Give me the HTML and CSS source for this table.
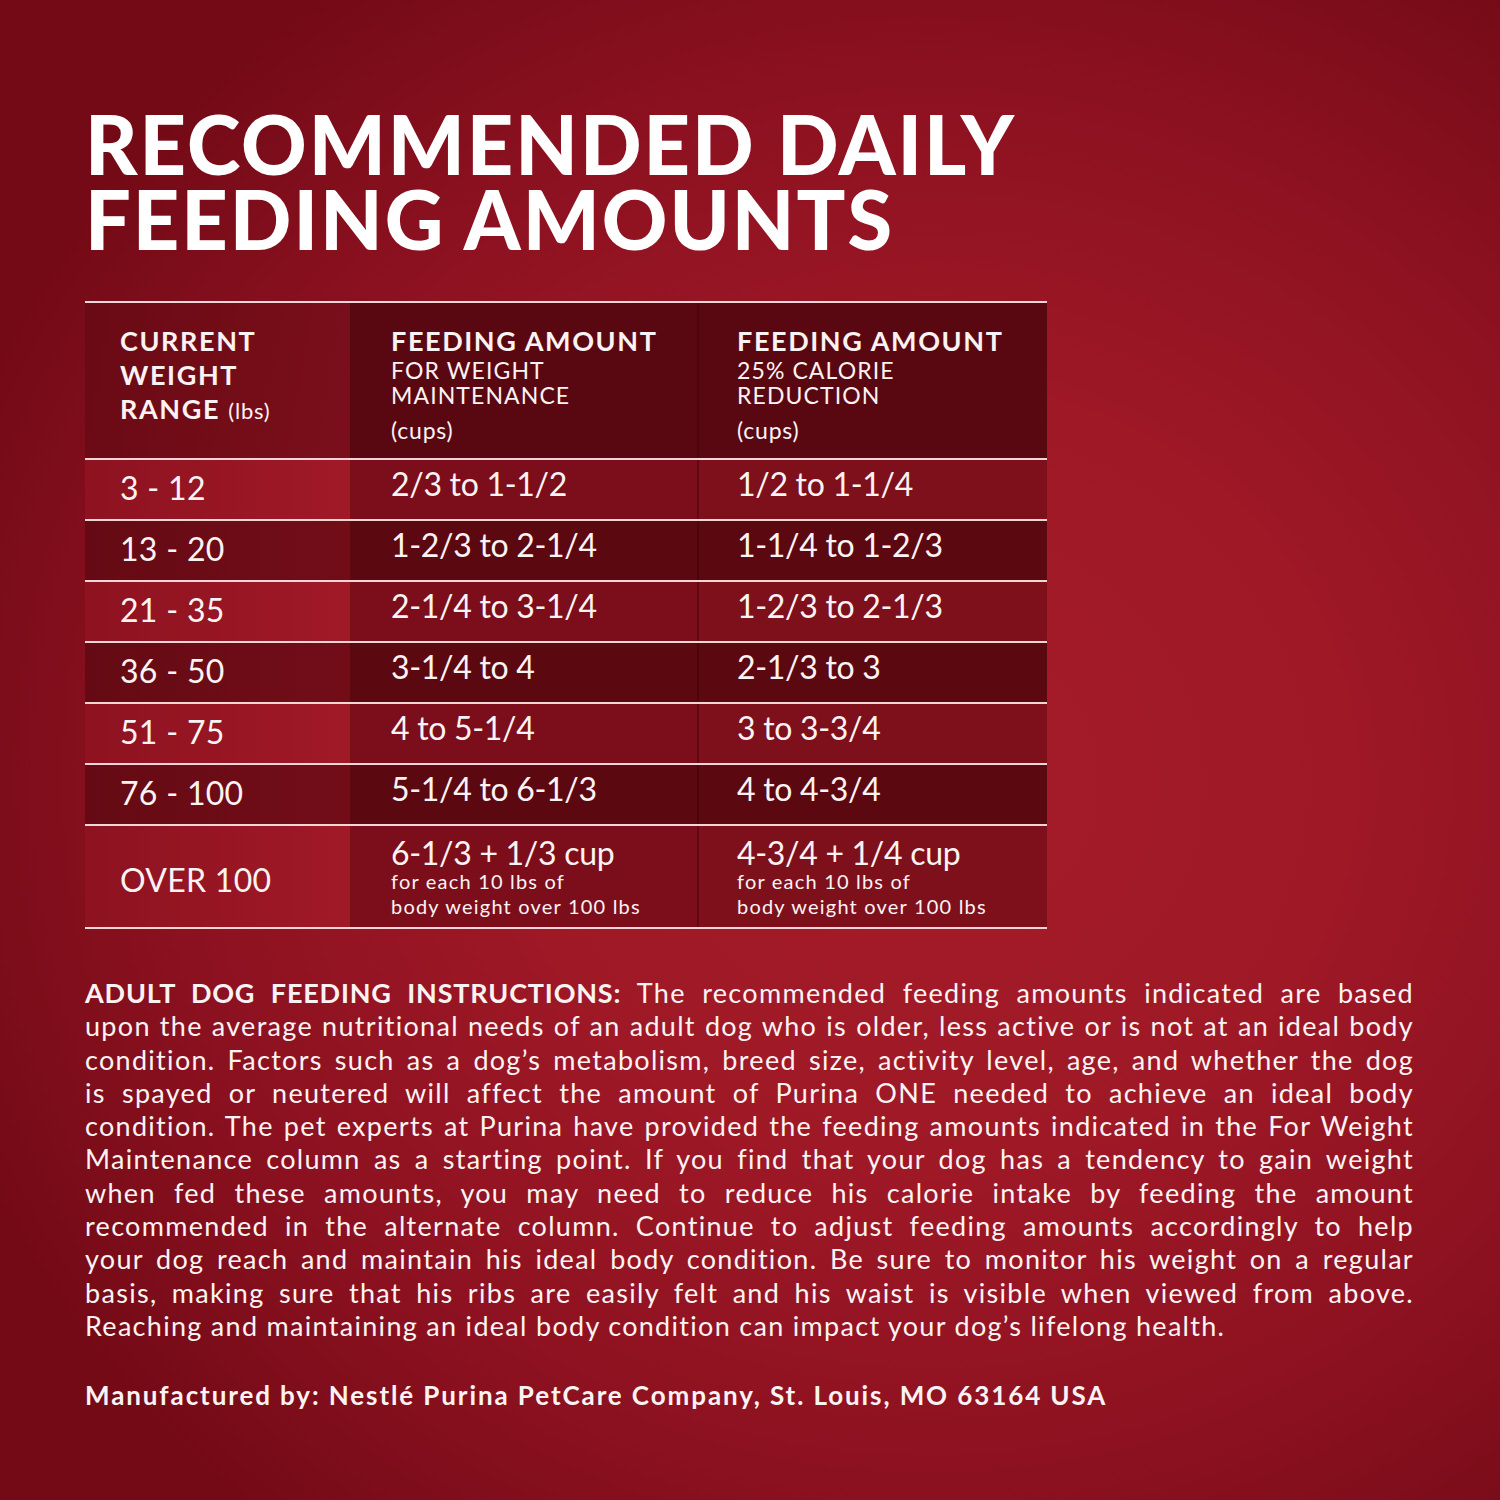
FILE: index.html
```html
<!DOCTYPE html>
<html lang="en">
<head>
<meta charset="utf-8">
<title>Recommended Daily Feeding Amounts</title>
<link rel="stylesheet" href="styles.css">
</head>
<body>
<div class="page">
  <h1 class="title">RECOMMENDED DAILY<br>FEEDING AMOUNTS</h1>

  <div class="table">
    <div class="row head">
      <div class="cell c1">
        <div class="hb">CURRENT</div>
        <div class="hb">WEIGHT</div>
        <div class="hb">RANGE <span class="unit">(lbs)</span></div>
      </div>
      <div class="cell c2">
        <div class="hb">FEEDING AMOUNT</div>
        <div class="hs">FOR WEIGHT</div>
        <div class="hs">MAINTENANCE</div>
        <div class="hc">(cups)</div>
      </div>
      <div class="cell c3">
        <div class="hb">FEEDING AMOUNT</div>
        <div class="hs">25% CALORIE</div>
        <div class="hs">REDUCTION</div>
        <div class="hc">(cups)</div>
      </div>
    </div>

    <div class="row light">
      <div class="cell c1"><span class="num">3 - 12</span></div>
      <div class="cell c2"><span class="num">2/3 to 1-1/2</span></div>
      <div class="cell c3"><span class="num">1/2 to 1-1/4</span></div>
    </div>
    <div class="row dark">
      <div class="cell c1"><span class="num">13 - 20</span></div>
      <div class="cell c2"><span class="num">1-2/3 to 2-1/4</span></div>
      <div class="cell c3"><span class="num">1-1/4 to 1-2/3</span></div>
    </div>
    <div class="row light">
      <div class="cell c1"><span class="num">21 - 35</span></div>
      <div class="cell c2"><span class="num">2-1/4 to 3-1/4</span></div>
      <div class="cell c3"><span class="num">1-2/3 to 2-1/3</span></div>
    </div>
    <div class="row dark">
      <div class="cell c1"><span class="num">36 - 50</span></div>
      <div class="cell c2"><span class="num">3-1/4 to 4</span></div>
      <div class="cell c3"><span class="num">2-1/3 to 3</span></div>
    </div>
    <div class="row light">
      <div class="cell c1"><span class="num">51 - 75</span></div>
      <div class="cell c2"><span class="num">4 to 5-1/4</span></div>
      <div class="cell c3"><span class="num">3 to 3-3/4</span></div>
    </div>
    <div class="row dark">
      <div class="cell c1"><span class="num">76 - 100</span></div>
      <div class="cell c2"><span class="num">5-1/4 to 6-1/3</span></div>
      <div class="cell c3"><span class="num">4 to 4-3/4</span></div>
    </div>
    <div class="row light last">
      <div class="cell c1"><span class="num">OVER 100</span></div>
      <div class="cell c2">
        <div class="num">6-1/3 + 1/3 cup</div>
        <div class="small">for each 10 lbs of</div>
        <div class="small">body weight over 100 lbs</div>
      </div>
      <div class="cell c3">
        <div class="num">4-3/4 + 1/4 cup</div>
        <div class="small">for each 10 lbs of</div>
        <div class="small">body weight over 100 lbs</div>
      </div>
    </div>
  </div>

  <div class="instr">
    <span class="ln"><b>ADULT DOG FEEDING INSTRUCTIONS:</b> The recommended feeding amounts indicated are based</span>
    <span class="ln">upon the average nutritional needs of an adult dog who is older, less active or is not at an ideal body</span>
    <span class="ln">condition. Factors such as a dog’s metabolism, breed size, activity level, age, and whether the dog</span>
    <span class="ln">is spayed or neutered will affect the amount of Purina ONE needed to achieve an ideal body</span>
    <span class="ln">condition. The pet experts at Purina have provided the feeding amounts indicated in the For Weight</span>
    <span class="ln">Maintenance column as a starting point. If you find that your dog has a tendency to gain weight</span>
    <span class="ln">when fed these amounts, you may need to reduce his calorie intake by feeding the amount</span>
    <span class="ln">recommended in the alternate column. Continue to adjust feeding amounts accordingly to help</span>
    <span class="ln">your dog reach and maintain his ideal body condition. Be sure to monitor his weight on a regular</span>
    <span class="ln">basis, making sure that his ribs are easily felt and his waist is visible when viewed from above.</span>
    <span class="ln end">Reaching and maintaining an ideal body condition can impact your dog’s lifelong health.</span>
  </div>

  <p class="mfr">Manufactured by: Nestlé Purina PetCare Company, St. Louis, MO 63164 USA</p>
</div>
</body>
</html>
```

FILE: styles.css
```css
html, body {
  margin: 0;
  padding: 0;
}

body {
  width: 1500px;
  height: 1500px;
  overflow: hidden;
  font-family: "Lato", "Liberation Sans", sans-serif;
  color: #fbf3f3;
  background: #8a1120;
}

.page {
  box-sizing: border-box;
  width: 1500px;
  height: 1500px;
  padding: 106px 0 0 85px;
  background:
    radial-gradient(ellipse 70% 65% at 62% 52%, #a51c2a 0%, #9e1826 40%, #8c1120 72%, #730a16 100%);
}

.title {
  margin: 0;
  font-size: 81px;
  line-height: 75px;
  font-weight: 900;
  letter-spacing: 2px;
  color: #ffffff;
}

.table {
  margin-top: 45px;
  width: 962px;
  border-bottom: 2px solid #f0d6d6;
}

.row {
  display: grid;
  grid-template-columns: 265px 347px 350px;
  border-top: 2px solid #f0d6d6;
  height: 59px;
}

.row.head {
  height: 155px;
}

.row.last {
  height: 101px;
}

.cell {
  box-sizing: border-box;
  padding-top: 8px;
}

.cell.c1 {
  padding-left: 35px;
  padding-top: 12px;
}

.cell.c2 {
  padding-left: 41px;
}

.cell.c3 {
  padding-left: 38px;
  border-left: 2px solid rgba(60, 0, 8, 0.45);
}

/* header */
.head .cell {
  padding-top: 21px;
}

.head .c1 {
  background: linear-gradient(100deg, #6a0a14 0%, #7a0f1b 100%);
}

.head .c2,
.head .c3 {
  background: #590811;
}

.hb {
  font-size: 27px;
  line-height: 34px;
  font-weight: 700;
  letter-spacing: 1.6px;
}

.unit {
  font-size: 22px;
  font-weight: 400;
  letter-spacing: 0.8px;
}

.hs {
  font-size: 23px;
  line-height: 25px;
  font-weight: 400;
  letter-spacing: 1.1px;
}

.hc {
  margin-top: 10px;
  font-size: 23px;
  line-height: 25px;
  font-weight: 400;
  letter-spacing: 0.8px;
}

/* body rows */
.light .c1 {
  background: linear-gradient(90deg, #8e1220 0%, #a01927 100%);
}

.light .c2 {
  background: #7b0e1a;
}

.light .c3 {
  background: #7e101c;
}

.dark .c1 {
  background: linear-gradient(90deg, #650a14 0%, #720d18 100%);
}

.dark .c2,
.dark .c3 {
  background: #5b0811;
}

.num {
  font-size: 32px;
  line-height: 32px;
  font-weight: 400;
  letter-spacing: -0.3px;
}

.c1 .num {
  letter-spacing: 0.3px;
}

.last .cell {
  padding-top: 11px;
}

.last .c1 {
  padding-top: 38px;
}

.small {
  font-size: 20px;
  line-height: 25px;
  letter-spacing: 1.2px;
}

/* instructions */
.instr {
  margin-top: 47px;
  width: 1329px;
  font-size: 27px;
  line-height: 33.3px;
  letter-spacing: 1.3px;
}

.instr b {
  font-weight: 700;
  letter-spacing: 0.8px;
}

.ln {
  display: block;
  text-align: justify;
  text-align-last: justify;
}

.ln.end {
  text-align: left;
  text-align-last: left;
}

.mfr {
  margin: 37px 0 0;
  font-size: 26px;
  line-height: 33.3px;
  font-weight: 700;
  letter-spacing: 1.9px;
}
```
